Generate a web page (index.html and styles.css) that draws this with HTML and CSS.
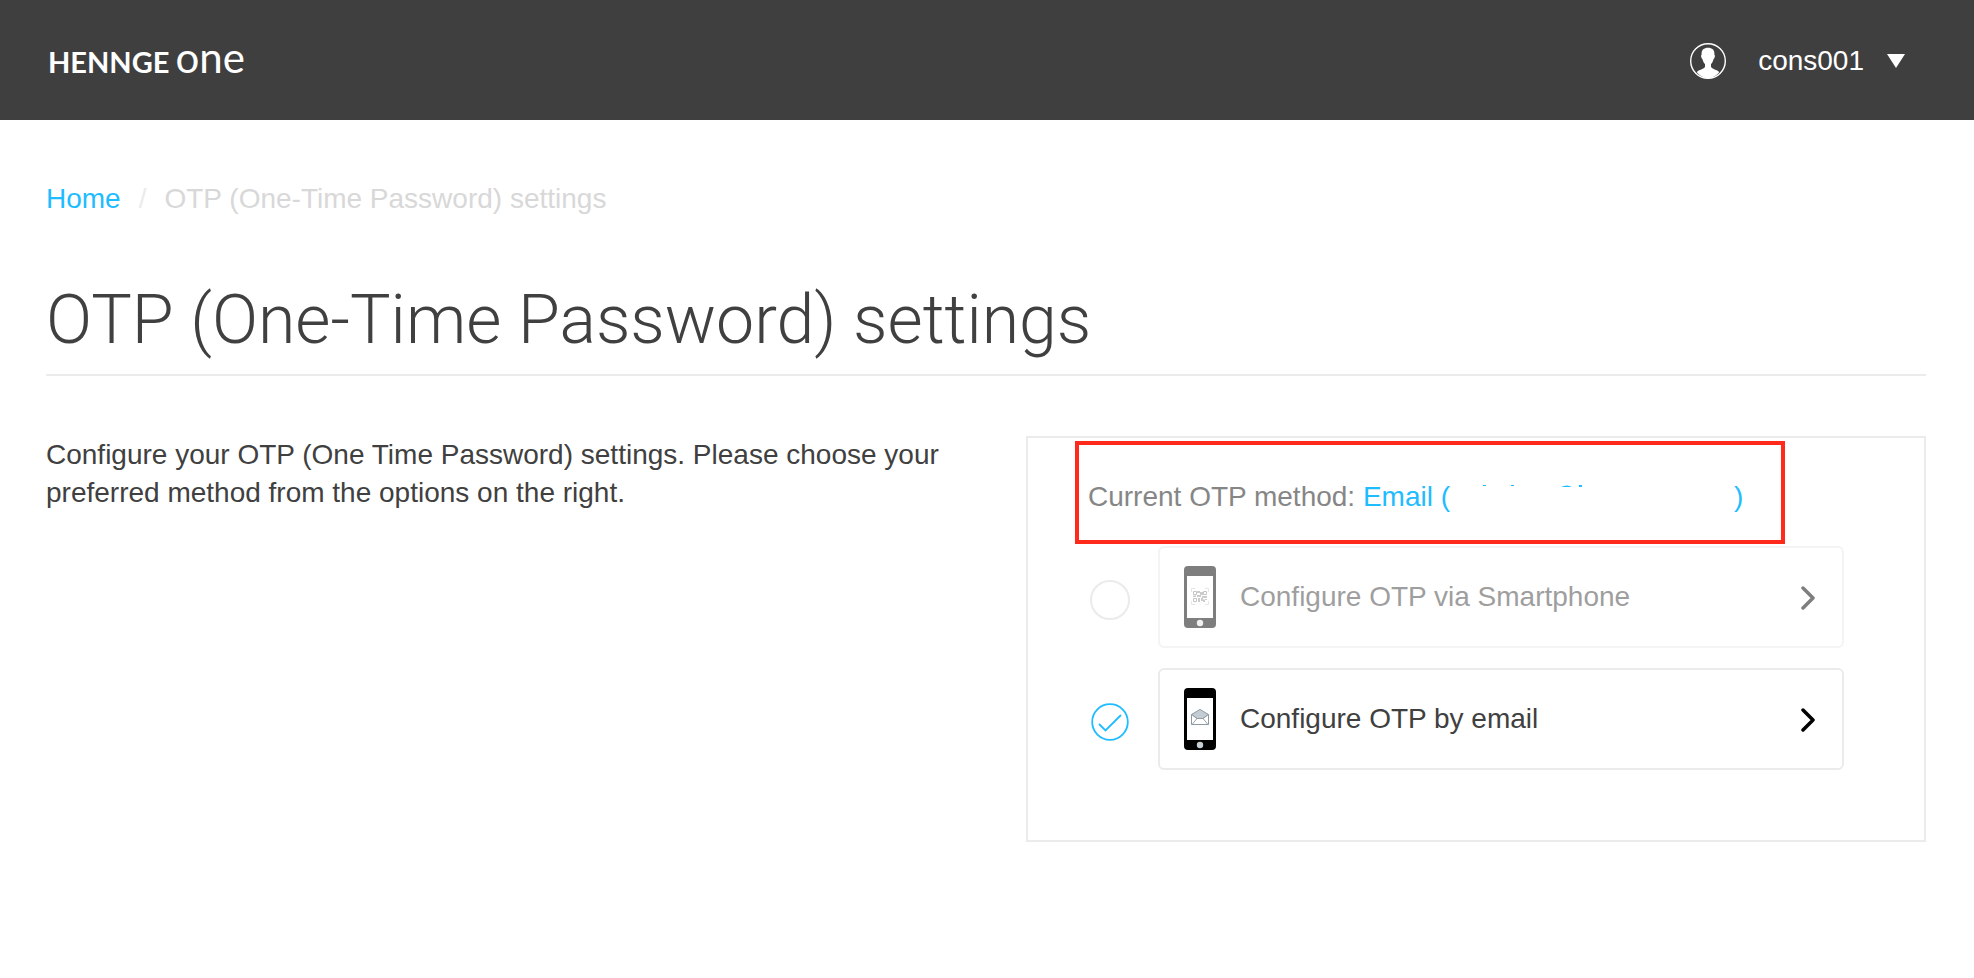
FILE: index.html
```html
<!DOCTYPE html>
<html lang="en">
<head>
<meta charset="utf-8">
<meta name="viewport" content="width=device-width, initial-scale=1">
<title>OTP (One-Time Password) settings</title>
<link rel="stylesheet" href="styles.css">
</head>
<body>
<header class="site-header">
  <a class="brand" href="#"><span class="brand-name">HENNGE</span><span class="brand-product">one</span></a>
  <button class="account" type="button">
    <svg class="account-avatar" viewBox="0 0 36 36" aria-hidden="true">
      <circle cx="18" cy="18" r="17.3" fill="none" stroke="#fff" stroke-width="1.4"/>
      <path fill="#fff" d="M18 4.8c-4.200 0-6.600 2.200-6.400 6.200.1 1-.6 1.200-.5 2.300.1 1.300.8 2.400 1.400 2.900.5 2.200 1.300 3.700 2.500 4.900v2.600c-.5 2.400-6.500 2.800-8.200 5.500A17 17 0 0 0 18 35.400a17 17 0 0 0 11.200-6.200c-1.700-2.700-7.700-3.100-8.200-5.500v-2.600c1.200-1.200 2-2.700 2.500-4.900.6-.5 1.300-1.600 1.400-2.900.1-1.100-.6-1.300-.5-2.300.2-4-2.200-6.200-6.400-6.200z"/>
    </svg>
    <span>cons001</span>
    <svg class="account-caret" viewBox="0 0 18 14" aria-hidden="true"><path fill="#fff" d="M0 0h18L9 14z"/></svg>
  </button>
</header>

<main class="page">
  <nav class="breadcrumb" aria-label="Breadcrumb">
    <a href="#">Home</a>
    <span class="breadcrumb-separator" aria-hidden="true">/</span>
    <span>OTP (One-Time Password) settings</span>
  </nav>

  <h1 class="page-title">OTP (One-Time Password) settings</h1>

  <div class="columns">
    <p class="intro">Configure your OTP (One Time Password) settings. Please choose your preferred method from the options on the right.</p>

    <section class="panel">
      <div class="highlight" aria-hidden="true"></div>
      <p class="current">Current OTP method: <span class="current-value">Email (<svg class="hidden-address" viewBox="0 0 284 22" aria-hidden="true"><path fill="#1fbcff" d="M33 1h3v1h-3zM61 1h3v1h-3zM111 3q6-3 11 0zM129 1h3v2h-3z"/></svg>)</span></p>

      <div class="option option-inactive">
        <input class="option-radio" type="radio" name="method" id="method-smartphone" aria-label="Use smartphone">
        <button class="option-button" type="button">
          <svg class="phone" viewBox="0 0 32 62" aria-hidden="true">
            <rect width="32" height="62" rx="4"/>
            <path fill="#fff" d="M3 10h26v42H3z"/>
            <circle cx="16" cy="57" r="3.200" fill="#e0e6ea"/>
            <path fill="none" stroke="#c9d0d4" d="M7.500 26v-3.500H11M21 22.500h3.500V26M24.500 35v3.500H21M11 38.500H7.500V35"/>
            <path fill="none" stroke="#8f8f8f" d="M9.500 25.500h3v3h-3zM19.500 25.500h3v3h-3zM9.500 32.500h3v3h-3z"/>
            <path fill="#9a9a9a" d="M13 25h3v2h-3zM16 26h3v3h-3zM13 29h4v2h-4zM9 29.500h3V31H9zM18 30h3v2h-3zM21 30h2v2h-2zM14 32h2v4h-2zM17 32h2v3h-2zM19 33.500h2v2.500h-2zM21 33h2v1h-2z"/>
          </svg>
          <span class="option-label">Configure OTP via Smartphone</span>
          <svg class="chevron" viewBox="0 0 14 24" aria-hidden="true"><path fill="none" stroke="#000" stroke-width="3.500" stroke-linecap="round" stroke-linejoin="round" d="M2 2l10 10L2 22"/></svg>
        </button>
      </div>

      <div class="option">
        <input class="option-radio" type="radio" name="method" id="method-email" aria-label="Use email" checked>
        <button class="option-button" type="button">
          <svg class="phone" viewBox="0 0 32 62" aria-hidden="true">
            <rect width="32" height="62" rx="4"/>
            <path fill="#fff" d="M3 10h26v42H3z"/>
            <circle cx="16" cy="57" r="3.200" fill="#c8d0d6"/>
            <path fill="#fff" stroke="#8c979f" d="M7.500 26.500v10h17v-10L16 21.500z"/>
            <path fill="#c5cdd4" stroke="#98a3ab" stroke-width=".8" d="M8 26.500l8-5 8 5-5 4h-6z"/>
            <path fill="none" stroke="#8c979f" stroke-width=".9" d="M7.500 26.500l5.500 4h6l5.500-4M13 30.500l-5 6M19 30.500l5 6"/>
          </svg>
          <span class="option-label">Configure OTP by email</span>
          <svg class="chevron" viewBox="0 0 14 24" aria-hidden="true"><path fill="none" stroke="#000" stroke-width="3.500" stroke-linecap="round" stroke-linejoin="round" d="M2 2l10 10L2 22"/></svg>
        </button>
      </div>
    </section>
  </div>
</main>
</body>
</html>
```
FILE: styles.css
```css
* {
  box-sizing: border-box;
}

body {
  margin: 0;
  background: #fff;
  color: #404040;
  font-family: "Liberation Sans", Arial, sans-serif;
  font-size: 28px;
  line-height: 38px;
}

a {
  color: #1fbcff;
  text-decoration: none;
}

button {
  font: inherit;
  color: inherit;
  cursor: pointer;
}

.site-header {
  display: flex;
  align-items: center;
  justify-content: space-between;
  height: 120px;
  padding: 0 69px 0 48px;
  background: #3f3f3f;
  color: #fff;
}

.brand {
  display: flex;
  align-items: baseline;
  gap: 6px;
  padding-bottom: 2px;
  color: #fff;
  font-family: Lato, sans-serif;
}

.brand-name {
  font-size: 29px;
  font-weight: 700;
}

.brand-product {
  font-size: 42px;
}

.account {
  display: flex;
  align-items: center;
  padding: 2px 0 0;
  border: 0;
  background: none;
}

.account-avatar {
  width: 36px;
  margin-right: 32px;
}

.account-caret {
  width: 18px;
  margin-left: 23px;
}

.page {
  padding: 60px 48px 60px 46px;
}

.breadcrumb {
  display: flex;
  gap: 18px;
  color: #d8d8d8;
}

.breadcrumb-separator {
  color: #ebebeb;
}

.page-title {
  margin: 56px 0 60px;
  padding-bottom: 8px;
  border-bottom: 2px solid #ebebeb;
  font-family: Roboto, sans-serif;
  font-size: 68px;
  font-weight: 300;
  line-height: 92px;
}

.columns {
  display: grid;
  grid-template-columns: 49fr 45fr;
}

.intro {
  max-width: 920px;
  margin: 0;
}

.panel {
  position: relative;
  padding: 40px 80px 70px 60px;
  border: 2px solid #ebebeb;
}

/* callout frame drawn over the current method */
.highlight {
  position: absolute;
  top: 3px;
  left: 47px;
  right: 139px;
  height: 103px;
  border: 4px solid #ff2a1c;
}

.current {
  margin: 0 0 30px;
  color: #868686;
}

.current-value {
  color: #1fbcff;
}

.hidden-address {
  width: 284px;
  height: 22px;
}

.option {
  display: flex;
  align-items: center;
  gap: 28px;
}

.option + .option {
  margin-top: 20px;
}

.option-inactive {
  opacity: .5;
}

.option-radio {
  appearance: none;
  flex: none;
  width: 40px;
  height: 40px;
  margin: 6px 0 0 2px;
  border: 2px solid #d8d8d8;
  border-radius: 50%;
}

.option-radio:checked {
  border: 0;
  background: url("data:image/svg+xml,%3Csvg xmlns='http://www.w3.org/2000/svg' viewBox='0 0 40 40' fill='none' stroke='%231fbcff' stroke-width='1.800' stroke-linecap='round'%3E%3Ccircle cx='20' cy='20' r='17.800'/%3E%3Cpath d='M9.500 22.500l6 6L30.500 13.500'/%3E%3C/svg%3E");
}

.option-button {
  display: flex;
  flex: 1;
  align-items: center;
  height: 102px;
  padding: 0 27px 0 24px;
  border: 2px solid #ebebeb;
  border-radius: 6px;
  background: #fff;
}

.phone {
  width: 32px;
  margin-right: 24px;
}

.option-label {
  flex: 1;
  text-align: left;
}

.chevron {
  width: 14px;
  margin-top: 2px;
}
```
